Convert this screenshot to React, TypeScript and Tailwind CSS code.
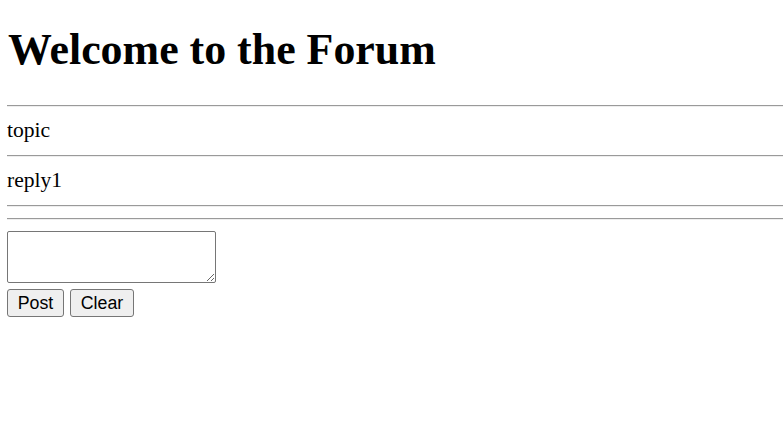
import React, { useState } from 'react';

const posts = ['topic', 'reply1'];

function Rule() {
  return <div className="h-[2px] w-full border-t border-b border-t-[#9a9a9a] border-b-[#eeeeee]" />;
}

export default function App() {
  const [text, setText] = useState('');

  return (
    <div className="min-h-[440px] bg-white pl-[7px] text-black font-['Liberation_Serif',serif]">
      <h1 className="pt-[25px] text-[43.9px] font-bold leading-[48px] pl-px">Welcome to the Forum</h1>

      <div className="mt-[32px] flex flex-col">
        {posts.map(post => (
          <div key={post}>
            <Rule />
            <div className="pt-[10px] pb-[12px] text-[21.6px] leading-[26px]">{post}</div>
          </div>
        ))}
        <Rule />
        <div className="h-[11px]" />
        <Rule />
      </div>

      <div className="mt-[11px] flex flex-col gap-[6px]">
        <textarea
          value={text}
          onChange={e => setText(e.target.value)}
          className="block h-[52px] w-[209px] rounded-[2px] border border-[#767676] bg-white px-[3px] py-[2px] font-['Liberation_Mono',monospace] text-[17.78px]"
        />
        <div className="flex gap-[6px] font-['Liberation_Sans',Arial,sans-serif] text-[17.78px]">
          <button className="flex h-[28px] w-[57px] items-center justify-center rounded-[3px] border border-[#767676] bg-[#efefef]">
            Post
          </button>
          <button
            onClick={() => setText('')}
            className="flex h-[28px] w-[64px] items-center justify-center rounded-[3px] border border-[#767676] bg-[#efefef]"
          >
            Clear
          </button>
        </div>
      </div>
    </div>
  );
}
